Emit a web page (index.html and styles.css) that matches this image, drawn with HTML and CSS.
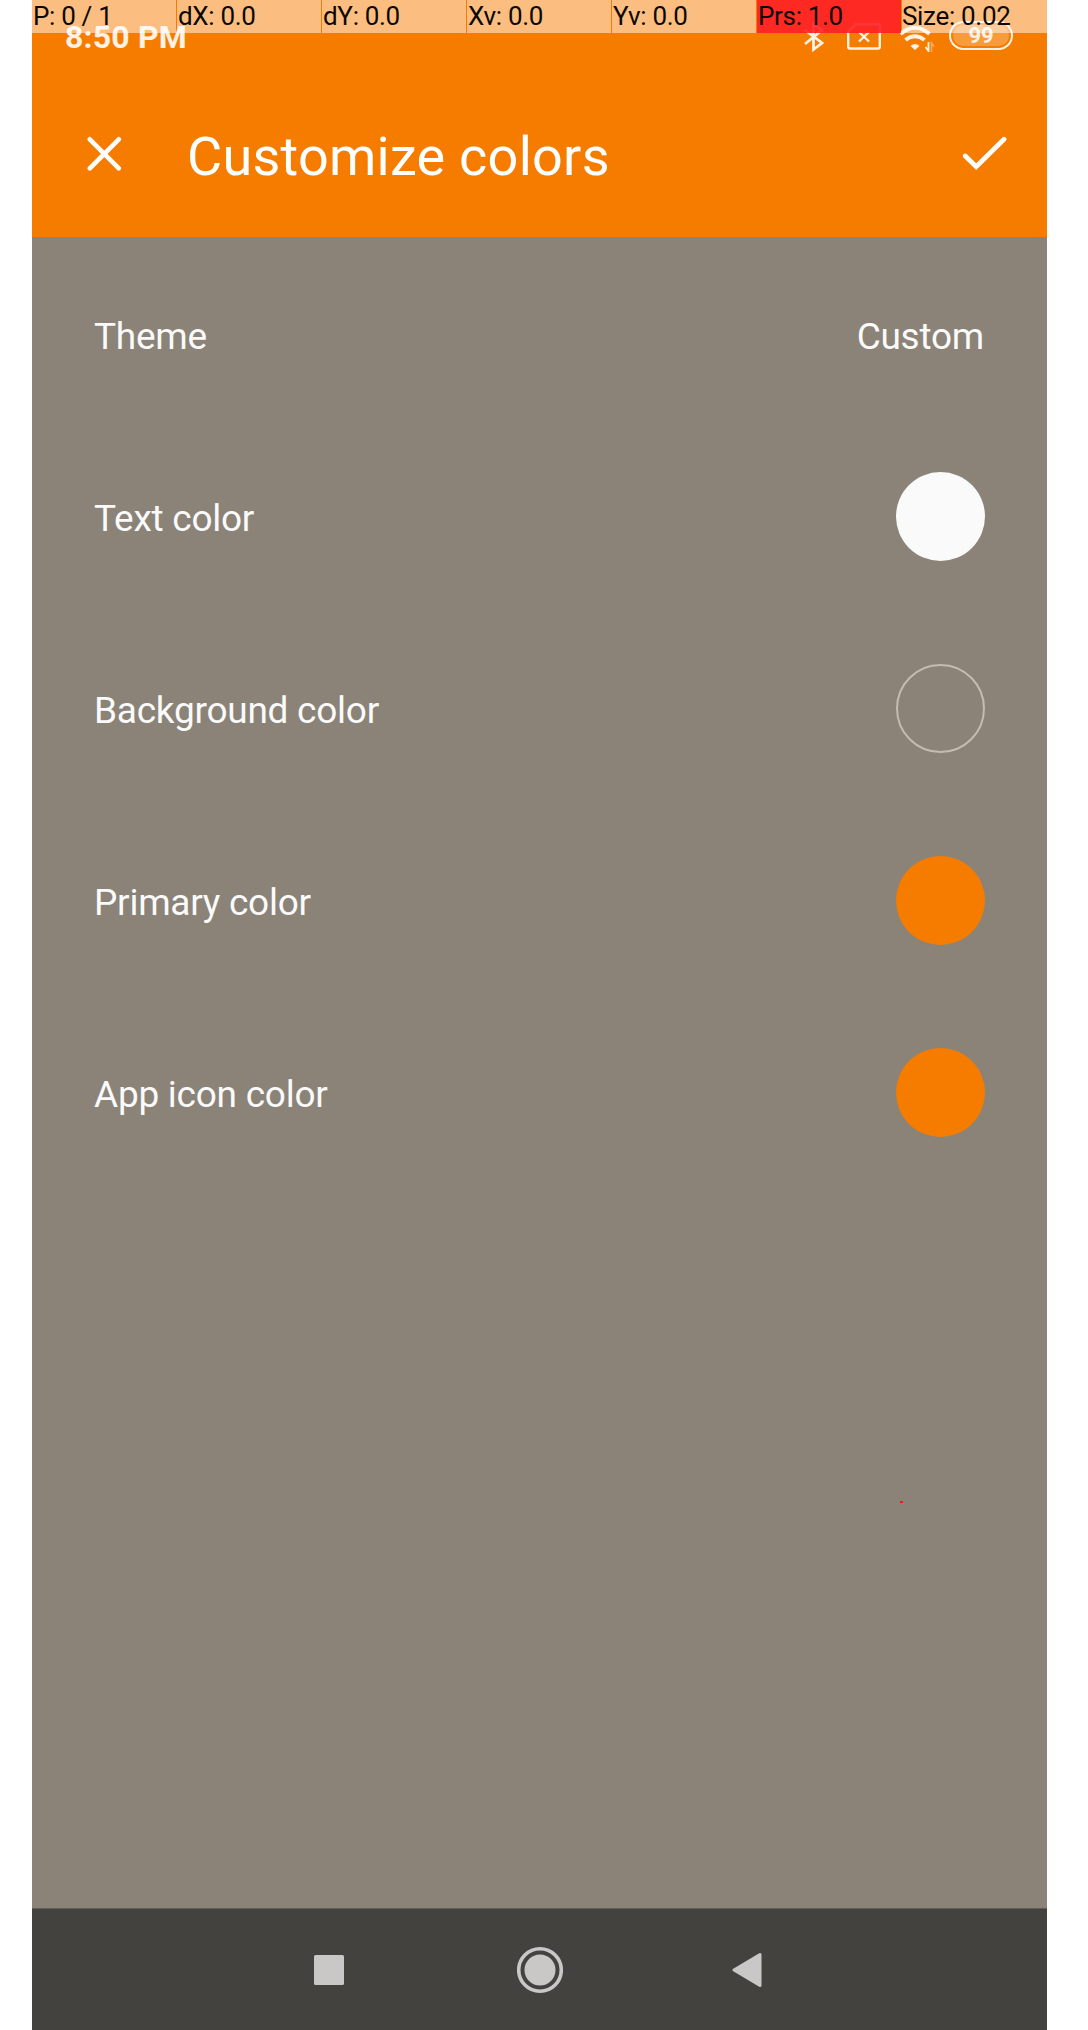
FILE: index.html
```html
<!DOCTYPE html>
<html lang="en">
<head>
<meta charset="utf-8">
<title>Customize colors</title>
<link rel="stylesheet" href="styles.css">
</head>
<body>
<div class="phone">
  <div class="pointer-bar">
    <span>P: 0 / 1</span><span>dX: 0.0</span><span>dY: 0.0</span><span>Xv: 0.0</span><span>Yv: 0.0</span><span class="pressure">Prs: 1.0</span><span class="size">Size: 0.02</span>
  </div>
  <header class="header">
    <div class="status">
      <span class="clock">8:50 PM</span>
      <div class="status-icons">
        <svg width="20" height="32" viewBox="0 0 20 32" fill="none" stroke="currentColor" stroke-width="2.800"><path d="M1 9 L18 22 L9.500 28.500 V3 L18 9 L1 23"/></svg>
        <svg class="sim" width="34" height="27" viewBox="0 0 34 27" fill="none" stroke="currentColor" stroke-width="2.400"><path d="M8.500 1.200 H31 Q32.800 1.200 32.800 3 V23.500 Q32.800 25.500 31 25.500 H3 Q1.200 25.500 1.200 23.500 V9 Z"/><path d="M12 9 L22 18.500 M22 9 L12 18.500"/></svg>
        <svg class="wifi" width="40" height="32" viewBox="0 0 40 32" fill="none" stroke="currentColor" stroke-width="4"><path d="M4.500 13 Q19 0.500 33.500 13 M9.500 19 Q19 11.500 28.500 19"/><path d="M14.500 25 Q19 21 23.500 25 L19 29 Z" fill="currentColor" stroke="none"/><path d="M32.500 21 V31 M32.500 30 L29.500 26" stroke-width="1.800"/><path d="M35.500 31 V22 L38 25.500" stroke-width="1.600" opacity=".4"/></svg>
        <span class="battery"><span class="charge">99</span></span>
      </div>
    </div>
    <div class="toolbar">
      <svg class="close" width="36" height="36" viewBox="0 0 36 36" fill="none" stroke="#fff" stroke-width="4.600" stroke-linecap="round"><path d="M3.800 3.300 L32.800 32.300 M32.800 3.300 L3.800 32.300"/></svg>
      <h1>Customize colors</h1>
      <svg class="check" width="46" height="36" viewBox="0 0 46 36" fill="none" stroke="#fff" stroke-width="4.800" stroke-linecap="round"><path d="M3.300 20 L14.200 30.600 L42 3.300"/></svg>
    </div>
  </header>
  <main class="settings">
    <div class="row theme"><span>Theme</span><span>Custom</span></div>
    <div class="row"><span>Text color</span><i class="swatch light"></i></div>
    <div class="row"><span>Background color</span><i class="swatch outline"></i></div>
    <div class="row"><span>Primary color</span><i class="swatch orange"></i></div>
    <div class="row"><span>App icon color</span><i class="swatch orange"></i></div>
    <i class="touch"></i>
  </main>
  <nav class="nav">
    <svg width="30" height="30" viewBox="0 0 30 30"><rect width="30" height="30" rx="1.500" fill="#c9c8c6"/></svg>
    <svg class="home" width="46" height="48" viewBox="0 0 46 48"><circle cx="23" cy="24" r="21.300" fill="none" stroke="#c9c8c6" stroke-width="3.600"/><circle cx="23" cy="24" r="15.500" fill="#c9c8c6"/></svg>
    <svg width="30" height="36" viewBox="0 0 30 36"><path d="M2 18 L28 2.500 V33.500 Z" fill="#c9c8c6" stroke="#c9c8c6" stroke-width="3" stroke-linejoin="round"/></svg>
  </nav>
</div>
</body>
</html>
```
FILE: styles.css
```css
* { box-sizing: border-box; }
body { margin: 0; background: #fff; font-family: Roboto, sans-serif; }
svg { display: block; flex: none; }
.phone {
  position: relative;
  width: 1015px;
  height: 2030px;
  margin-left: 32px;
  display: flex;
  flex-direction: column;
  overflow: hidden;
}
.pointer-bar {
  position: absolute;
  inset: 0 0 auto 0;
  z-index: 1;
  height: 33px;
  display: grid;
  grid-template-columns: repeat(7, 144px);
  column-gap: 1px;
  color: #0c0804;
  font-size: 26px;
  letter-spacing: -.32px;
  line-height: 33px;
  white-space: nowrap;
}
.pointer-bar span { padding-left: 1px; background: rgba(255, 255, 255, .5); }
.pointer-bar .pressure { background: rgba(255, 32, 38, .9); }
.pointer-bar .size { width: 145px; padding-left: 0; }
.header { height: 237px; background: #f67c00; color: #fff; }
.status {
  height: 74px;
  padding: 0 34px 0 33px;
  display: flex;
  justify-content: space-between;
  color: #fff1e4;
}
.clock { font-size: 32px; font-weight: 700; letter-spacing: .2px; line-height: 38px; padding-top: 18px; }
.status-icons { display: flex; align-items: flex-start; padding-top: 21px; }
.sim { margin: 2px 0 0 23px; }
.wifi { margin-left: 15px; }
.battery {
  width: 64px;
  height: 29px;
  margin: 0 0 0 13px;
  padding: 2px;
  border: 2.5px solid currentColor;
  border-radius: 15px;
}
.charge {
  display: block;
  height: 21px;
  border-radius: 11px;
  background: rgba(255, 255, 255, .24);
  font-size: 22px;
  font-weight: 700;
  line-height: 22px;
  text-align: center;
}
.toolbar { display: flex; align-items: center; height: 163px; padding: 0 39px 0 54px; }
.toolbar svg { margin-bottom: 3px; }
.toolbar h1 { margin: 2px auto 0 65px; font-size: 54px; font-weight: 400; letter-spacing: .25px; line-height: 64px; }
.settings { position: relative; height: 1671px; background: #8b8377; color: #fafafa; }
.row {
  height: 192px;
  padding: 0 62px 0 62px;
  display: flex;
  align-items: center;
  justify-content: space-between;
  font-size: 37px;
  letter-spacing: -.25px;
  line-height: 44px;
}
.row > span { padding-top: 4px; }
.theme { height: 183.6px; padding-top: 12px; padding-right: 63px; }
.swatch { width: 89px; height: 89px; border-radius: 50%; }
.light { background: #fafafa; }
.outline { border: 2px solid #c4bcb4; }
.orange { background: #f67c00; }
.touch { position: absolute; left: 868px; top: 1264px; width: 3px; height: 2px; background: #f01818; }
.nav {
  height: 122px;
  padding: 0 285px 0 282px;
  display: flex;
  align-items: center;
  justify-content: space-between;
  background: #44423e;
  border-top: 1px solid #625e57;
}
.home { margin-left: 3px; }
```
